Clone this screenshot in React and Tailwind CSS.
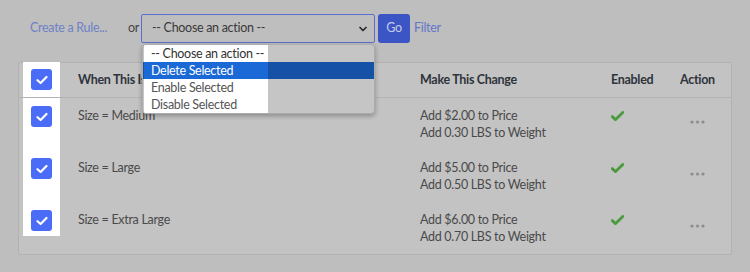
import { ChevronDown } from 'lucide-react';

// Shipping rules list with the bulk-action dropdown open, seen through a dim
// tutorial overlay: the checkbox column and the option list are spotlit.

const RULES = [
  { when: 'Size = Medium', price: '$2.00', weight: '0.30' },
  { when: 'Size = Large', price: '$5.00', weight: '0.50' },
  { when: 'Size = Extra Large', price: '$6.00', weight: '0.70' },
];

const COLS = 'grid grid-cols-[51px_342px_191px_69px_59px]';

function Box() {
  return (
    <span className="flex h-[21px] w-[21px] items-center justify-center rounded-[3px] bg-[#4b6cf6]">
      <svg width="12" height="10" viewBox="0 0 12 10" fill="none">
        <path d="M1.5 5.2 L4.6 8 L10.5 2" stroke="#fff" strokeWidth="2.2" strokeLinecap="round" strokeLinejoin="round" />
      </svg>
    </span>
  );
}

function Tick() {
  return (
    <svg width="13" height="10" viewBox="0 0 13 10" fill="none">
      <path d="M1.2 5.6 L4.6 8.6 L11.8 1.4" stroke="#4b9a3e" strokeWidth="2.8" strokeLinecap="round" strokeLinejoin="round" />
    </svg>
  );
}

function Dots() {
  return (
    <svg width="15" height="4" viewBox="0 0 15 4">
      <circle cx="2" cy="2" r="1.6" fill="#8d8d8d" />
      <circle cx="7.5" cy="2" r="1.6" fill="#8d8d8d" />
      <circle cx="13" cy="2" r="1.6" fill="#8d8d8d" />
    </svg>
  );
}

const OPTIONS = ['-- Choose an action --', 'Delete Selected', 'Enable Selected', 'Disable Selected'];

export default function App() {
  return (
    <div className="min-h-[272px] w-[750px] bg-[#bebebe] px-[18px] pt-[14px] font-['Lato',sans-serif] text-[12.5px] tracking-[-0.3px]">
      <div className="flex h-[29px] items-center">
        <span className="w-[110px] pl-[12px] text-[#6f81c6]">Create a Rule...</span>
        <span className="w-[13px] text-[#454545]">or</span>
        <div className="relative z-20 h-[29px] w-[234px]">
          <div className="flex h-full items-center justify-between rounded-[2px] border border-[#5a6fcd] pl-[10px] pr-[5px] text-[#3a3a3a]">
            <span>-- Choose an action --</span>
            <ChevronDown size={12} strokeWidth={3.5} color="#2a2a2a" />
          </div>
          <div className="absolute left-px top-[30px] w-[233px] overflow-hidden rounded-[4px] border border-[#acacac] bg-[#c5c5c5] shadow-[0_2px_5px_rgba(0,0,0,0.3)]">
            <div className="relative">
              <div className="absolute left-px top-0 h-full w-[124px] bg-white" />
              {OPTIONS.map((o, i) => (
                <div
                  key={o}
                  className={`relative h-[17px] pl-[8px] leading-[17px] ${i === 1 ? 'bg-[#1551a7] text-white' : i === 0 ? 'text-[#333]' : 'text-[#555]'}`}
                >
                  {i === 1 && <div className="absolute left-px top-0 h-full w-[124px] bg-[#1b68d7]" />}
                  <span className="relative">{o}</span>
                </div>
              ))}
            </div>
          </div>
        </div>
        <span className="ml-[3px] flex h-[29px] w-[32px] items-center justify-center rounded-[3px] bg-[#3c55c4] text-[#c6cce8]">Go</span>
        <span className="ml-[4px] text-[#6376ca]">Filter</span>
      </div>

      <div className="relative mt-[19px] rounded-[2px] border border-[#b2b2b2] bg-[#c3c3c3]">
        <div className="absolute -top-px left-[4px] h-[174px] w-[37px] bg-white" />

        <div className={`${COLS} relative h-[35px] items-center border-b border-[#b3b3b3] font-bold text-[#2f333c]`}>
          <div className="self-start pl-[12px] pt-[6px]"><Box /></div>
          <div className="pl-[8px]">When This Is True</div>
          <div className="pl-[8px]">Make This Change</div>
          <div className="pl-[8px]">Enabled</div>
          <div className="pl-[8px]">Action</div>
        </div>

        {RULES.map((r) => (
          <div key={r.when} className={`${COLS} relative h-[52px] leading-[17px] text-[#4a4a4a]`}>
            <div className="pl-[12px] pt-[8px]"><Box /></div>
            <div className="pl-[8px] pt-[9px]">{r.when}</div>
            <div className="pl-[8px] pt-[9px]">
              <div>Add {r.price} to Price</div>
              <div>Add {r.weight} LBS to Weight</div>
            </div>
            <div className="pl-[8px] pt-[13px]"><Tick /></div>
            <div className="pl-[18px] pt-[22px]"><Dots /></div>
          </div>
        ))}
      </div>
    </div>
  );
}
